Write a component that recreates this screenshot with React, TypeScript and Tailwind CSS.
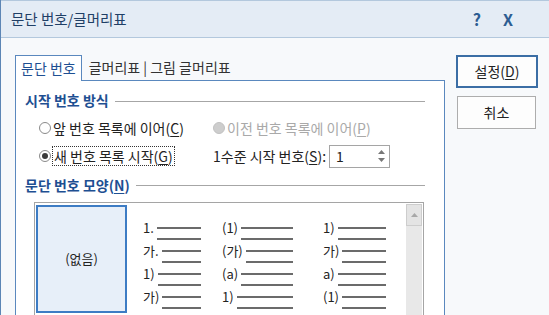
const U = ({ c }: { c: string }) => <span className="underline underline-offset-2">{c}</span>;

const Radio = ({ checked, disabled }: { checked?: boolean; disabled?: boolean }) => {
  if (disabled) return <span className="w-[12px] h-[12px] rounded-full bg-[#cdcdcd] border border-[#c2c2c2] shrink-0" />;
  return (
    <span className="w-[12px] h-[12px] rounded-full border border-[#8a8a8a] bg-white flex items-center justify-center shrink-0">
      {checked && <span className="w-[6px] h-[6px] rounded-full bg-[#3a3a3a]" />}
    </span>
  );
};

const Item = ({ label, w }: { label: string; w: string }) => (
  <div className={`flex items-start h-[23px] ${w}`}>
    <span className="leading-[16px] text-[13px] text-[#222] pr-[3px]">{label}</span>
    <div className="flex-1 flex flex-col gap-[9px] pt-[7px]">
      <div className="h-[2px] bg-[#6b6b6b]" />
      <div className="h-[2px] bg-[#6b6b6b]" />
    </div>
  </div>
);

const cols = [
  { w: "w-[58px]", ml: "", items: ["1.", "가.", "1)", "가)"] },
  { w: "w-[71px]", ml: "ml-[21px]", items: ["(1)", "(가)", "(a)", "1)"] },
  { w: "w-[63px]", ml: "ml-[30px]", items: ["1)", "가)", "a)", "(1)"] },
];

export default function App() {
  return (
    <div className="w-[549px] h-[315px] overflow-hidden bg-[#f7f9fb] border-l border-[#5d86b5] font-['Noto_Sans_CJK_KR','Liberation_Sans',sans-serif] text-[14px] text-[#222]">
      <div className="h-[38px] bg-[#e4ecf5] border-t border-[#8aa6c6] border-b border-[#b3c8dd] flex items-center pl-[10px] pr-[36px]">
        <span className="text-[14.5px] text-[#1f3f66]">문단 번호/글머리표</span>
        <span className="ml-auto text-[16px] font-bold text-[#2d5d92]">?</span>
        <span className="ml-[22px] text-[16px] font-bold text-[#2d5d92]">X</span>
      </div>

      <div className="flex pt-[16px] pl-[14px]">
        <div className="w-[430px]">
          <div className="h-[26px] flex items-end">
            <div className="h-[26px] px-[5px] border border-b-0 border-[#5a88be] bg-white flex items-center text-[#1e4f92] relative z-10 -mb-px">
              문단 번호
            </div>
            <span className="ml-[7px] self-center text-[#333]">글머리표 | 그림 글머리표</span>
          </div>

          <div className="border border-[#5a88be] bg-white h-[260px] pl-[9px] pt-[11px]">
            <div className="flex items-center h-[16px] w-[400px]">
              <span className="text-[14px] font-bold text-[#1e4f92] leading-[16px]">시작 번호 방식</span>
              <div className="flex-1 h-px bg-[#a6a6a6] ml-[6px] mt-[3px]" />
            </div>

            <div className="grid grid-cols-[188px_auto] mt-[10px]">
              <div className="h-[20px] flex items-center pl-[14px] gap-[2px]">
                <Radio />
                <span>앞 번호 목록에 이어(<U c="C" />)</span>
              </div>
              <div className="h-[20px] flex items-center gap-[2px]">
                <Radio disabled />
                <span className="text-[#a9a9a9]">이전 번호 목록에 이어(<U c="P" />)</span>
              </div>
              <div className="h-[24px] mt-[6px] flex items-center pl-[14px] gap-[1px]">
                <Radio checked />
                <span className="border border-dotted border-[#333] px-[1px] leading-[18px]">새 번호 목록 시작(<U c="G" />)</span>
              </div>
              <div className="h-[24px] mt-[6px] flex items-center">
                <span>1수준 시작 번호(<U c="S" />):</span>
                <div className="ml-[3px] w-[61px] h-[23px] border border-[#a5a5a5] bg-white flex items-center">
                  <span className="pl-[6px]">1</span>
                  <div className="ml-auto w-[16px] h-full flex flex-col items-center justify-center gap-[4px] text-[#777]">
                    <svg width="7" height="4" viewBox="0 0 7 4"><path d="M0 4 L3.5 0 L7 4 Z" fill="#777" /></svg>
                    <svg width="7" height="4" viewBox="0 0 7 4"><path d="M0 0 L3.5 4 L7 0 Z" fill="#777" /></svg>
                  </div>
                </div>
              </div>
            </div>

            <div className="flex items-center h-[16px] w-[400px] mt-[9px]">
              <span className="text-[14px] font-bold text-[#1e4f92] leading-[16px]">문단 번호 모양(<U c="N" />)</span>
              <div className="flex-1 h-px bg-[#a6a6a6] ml-[6px] mt-[1px]" />
            </div>

            <div className="mt-[9px] ml-[9px] w-[390px] h-[140px] border border-[#a5a5a5] bg-white flex pt-[2px] pl-[1px] pr-[1px]">
              <div className="w-[91px] h-[108px] border-2 border-[#3d7cc4] bg-[#e7eff9] flex items-center justify-center text-[13px]">
                (없음)
              </div>
              <div className="flex ml-[16px] pt-[15px]">
                {cols.map((c, i) => (
                  <div key={i} className={`flex flex-col ${c.ml}`}>
                    {c.items.map((l, j) => (
                      <Item key={j} label={l} w={c.w} />
                    ))}
                  </div>
                ))}
              </div>
              <div className="ml-auto -mt-[1px] w-[16px] bg-[#e8e8e8]">
                <div className="h-[22px] border border-[#cdcdcd] bg-[#e4e4e4] flex items-center justify-center">
                  <svg width="7" height="4" viewBox="0 0 7 4"><path d="M0 4 L3.5 0 L7 4 Z" fill="#a8a8a8" /></svg>
                </div>
              </div>
            </div>
          </div>
        </div>

        <div className="ml-[11px] mt-[1px] flex flex-col">
          <div className="w-[82px] h-[33px] border-2 border-[#3b6ea5] bg-[#fdfdfd] flex items-center justify-center">
            설정(<U c="D" />)
          </div>
          <div className="ml-[1px] mt-[8px] w-[79px] h-[33px] border border-[#adadad] bg-[#fdfdfd] flex items-center justify-center">
            취소
          </div>
        </div>
      </div>
    </div>
  );
}
